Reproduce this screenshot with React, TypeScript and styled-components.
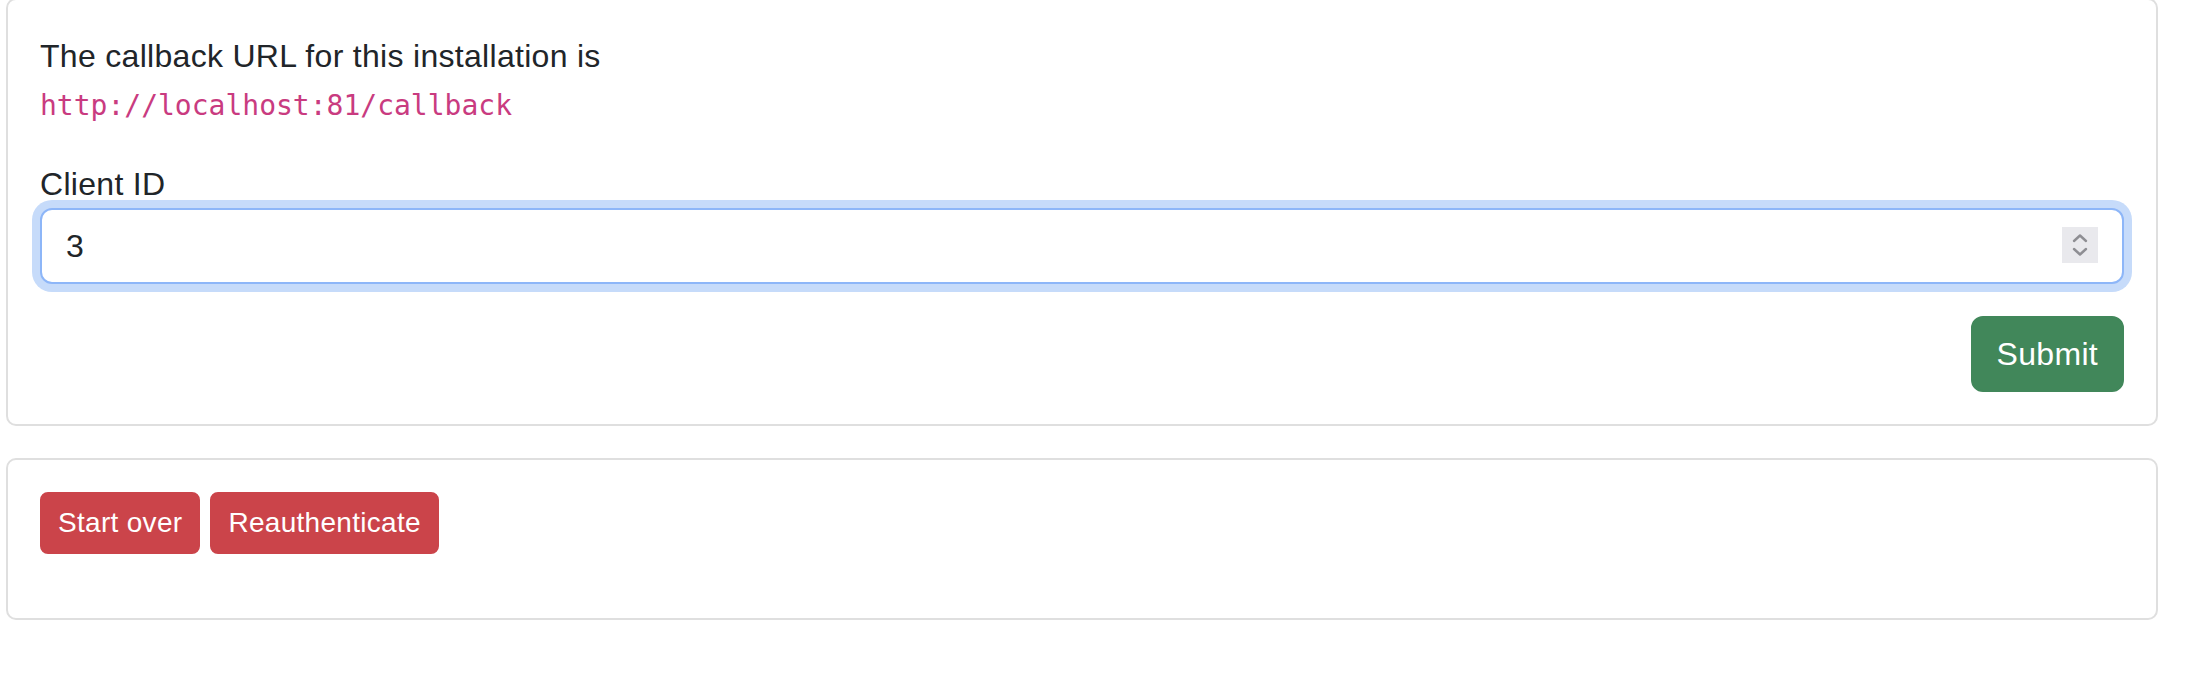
import React from 'react';
import styled, { createGlobalStyle } from 'styled-components';

const GlobalStyle = createGlobalStyle`
  body {
    margin: 0;
    background: #fff;
    color: #212529;
    font-family: "Liberation Sans", Arial, sans-serif;
    letter-spacing: 0.3px;
  }
`;

const Page = styled.div`
  width: 2152px;
  margin: -2px 0 0 6px;
`;

const Card = styled.section`
  border: 2px solid #dfdfdf;
  border-radius: 10px;
  background: #fff;
  margin-bottom: 32px;
`;

const CardBody = styled.div`
  padding: 32px;
`;

const Paragraph = styled.p`
  margin: 0 0 32px;
  font-size: 32px;
  line-height: 48px;
`;

const Code = styled.code`
  font-family: "DejaVu Sans Mono", "Liberation Mono", monospace;
  font-size: 28px;
  line-height: 1;
  letter-spacing: 0;
  color: #c93b80;
`;

const Label = styled.label`
  display: block;
  font-size: 32px;
  line-height: 48px;
`;

const InputWrap = styled.div`
  position: relative;
  margin-bottom: 32px;
`;

const NumberInput = styled.input`
  display: block;
  width: 100%;
  box-sizing: border-box;
  padding: 12px 24px;
  font-family: inherit;
  font-size: 32px;
  line-height: 48px;
  color: #212529;
  background: #fff;
  border: 2px solid #8db6f8;
  border-radius: 12px;
  box-shadow: 0 0 0 8px #c6dbfa;
  outline: none;
  -moz-appearance: textfield;

  &::-webkit-inner-spin-button,
  &::-webkit-outer-spin-button {
    -webkit-appearance: none;
    margin: 0;
  }
`;

const Spinner = styled.span`
  position: absolute;
  top: 19px;
  right: 26px;
  width: 36px;
  height: 36px;
  background: #e9e9ed;
  display: flex;
  align-items: center;
  justify-content: center;
`;

const Actions = styled.div<{ $align?: 'start' | 'end' }>`
  display: flex;
  justify-content: ${({ $align }) => ($align === 'end' ? 'flex-end' : 'flex-start')};
  gap: 10px;
`;

const ButtonRow = styled(Actions)`
  margin-bottom: 32px;
`;

const Button = styled.button<{ $variant: 'success' | 'danger'; $small?: boolean }>`
  font-family: inherit;
  letter-spacing: 0.3px;
  color: #fff;
  border: 2px solid transparent;
  cursor: pointer;
  background: ${({ $variant }) => ($variant === 'success' ? '#41875a' : '#cb444a')};
  border-color: ${({ $variant }) => ($variant === 'success' ? '#41875a' : '#cb444a')};
  font-size: ${({ $small }) => ($small ? '28px' : '32px')};
  line-height: ${({ $small }) => ($small ? '42px' : '48px')};
  padding: ${({ $small }) => ($small ? '8px 16px' : '12px 24px')};
  border-radius: ${({ $small }) => ($small ? '8px' : '12px')};
`;

const SpinIcon = () => (
  <svg width="16" height="28" viewBox="0 0 16 28" fill="none">
    <path d="M2 10 L8 4.5 L14 10" stroke="#8e8e93" strokeWidth="2.4" strokeLinecap="round" strokeLinejoin="round" />
    <path d="M2 18 L8 23.5 L14 18" stroke="#8e8e93" strokeWidth="2.4" strokeLinecap="round" strokeLinejoin="round" />
  </svg>
);

const App: React.FC = () => {
  return (
    <>
      <GlobalStyle />
      <Page>
        <Card>
          <CardBody>
            <Paragraph>
              The callback URL for this installation is
              <br />
              <Code>http://localhost:81/callback</Code>
            </Paragraph>

            <Label htmlFor="client-id">Client ID</Label>
            <InputWrap>
              <NumberInput id="client-id" type="number" defaultValue={3} />
              <Spinner>
                <SpinIcon />
              </Spinner>
            </InputWrap>

            <Actions $align="end">
              <Button $variant="success">Submit</Button>
            </Actions>
          </CardBody>
        </Card>

        <Card>
          <CardBody>
            <ButtonRow>
              <Button $variant="danger" $small>Start over</Button>
              <Button $variant="danger" $small>Reauthenticate</Button>
            </ButtonRow>
          </CardBody>
        </Card>
      </Page>
    </>
  );
};

export default App;
